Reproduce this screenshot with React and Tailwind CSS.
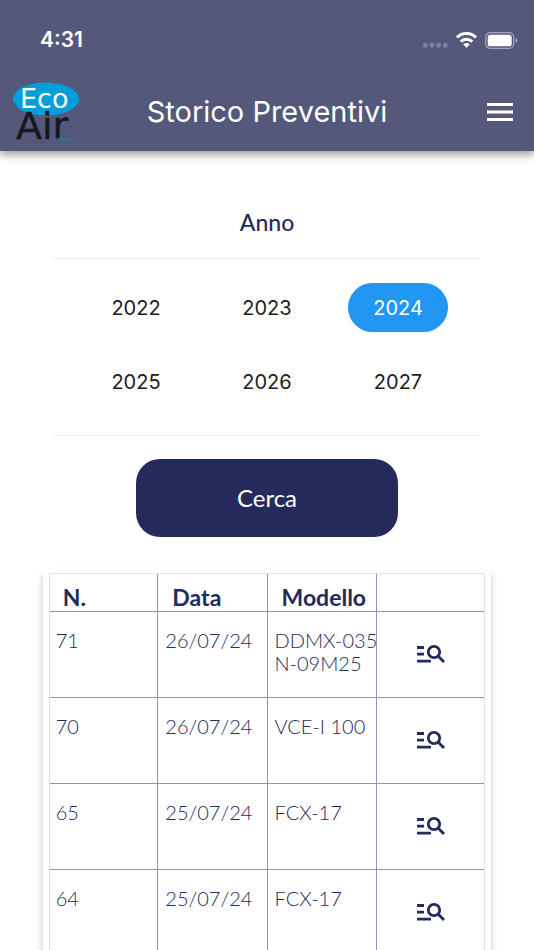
import React, { useState } from "react";

const years = [2022, 2023, 2024, 2025, 2026, 2027];

const quotes = [
  { id: 71, date: "26/07/24", model: ["DDMX-035", "N-09M25"] },
  { id: 70, date: "26/07/24", model: ["VCE-I 100"] },
  { id: 65, date: "25/07/24", model: ["FCX-17"] },
  { id: 64, date: "25/07/24", model: ["FCX-17"] }
];

function Logo() {
  return (
    <svg width="68" height="60" viewBox="0 0 68 60" className="overflow-visible" role="img" aria-label="Eco Air">
      <ellipse cx="34" cy="17" rx="33" ry="16.500" fill="#009fda" />
      <text x="8" y="26" fontSize="27" fill="#fff" fontFamily="'DejaVu Sans', sans-serif">
        Eco
      </text>
      <text x="4" y="57" fontSize="38" fill="#17181c" stroke="#17181c" strokeWidth="0.5" fontFamily="'DejaVu Sans', sans-serif">
        Air
      </text>
      <path d="M45 57h18" stroke="#1b7fae" strokeWidth="1.2" />
    </svg>
  );
}

function StatusBar() {
  return (
    <div className="h-[72px] pt-2 pl-10 pr-4 flex items-center justify-between">
      <span className="text-[21px] font-semibold">4:31</span>
      <div className="flex items-center gap-2">
        <svg width="25" height="18" viewBox="0 0 25 18" fill="#7f82a0">
          <rect x="0" y="12" width="4.500" height="4.500" rx="1.4" />
          <rect x="6.700" y="12" width="4.500" height="4.500" rx="1.4" />
          <rect x="13.400" y="12" width="4.500" height="4.500" rx="1.4" />
          <rect x="20.100" y="12" width="4.500" height="4.500" rx="1.4" />
        </svg>
        <svg width="21" height="16" viewBox="0 0 21 16" fill="none" stroke="#fff" strokeWidth="3">
          <path d="M1 5.4a13.6 13.6 0 0 1 19 0" />
          <path d="M4.8 9.6a8.2 8.2 0 0 1 11.4 0" />
          <path d="M7.2 12.400a4.700 4.700 0 0 1 6.600 0L10.500 15.800z" fill="#fff" stroke="none" />
        </svg>
        <svg width="33" height="17" viewBox="0 0 33 17">
          <rect x="0.700" y="0.700" width="28" height="15.600" rx="4.500" fill="none" stroke="#a3a5bb" strokeWidth="1.2" />
          <rect x="2.700" y="2.700" width="24" height="11.600" rx="2.600" fill="#fff" />
          <path d="M30.500 6v5c1.400-.5 2-1.400 2-2.500s-.6-2-2-2.500z" fill="#a3a5bb" />
        </svg>
      </div>
    </div>
  );
}

function SearchListIcon() {
  return (
    <svg width="28" height="20" viewBox="0 0 28 20" fill="none" stroke="currentColor" strokeWidth="2.8">
      <path d="M0 3.500h7M0 10.200h7M0 17.200h14" />
      <circle cx="17" cy="8" r="5.700" />
      <path d="M20.800 11.800l6.200 6.200" />
    </svg>
  );
}

export default function App() {
  const [year, setYear] = useState(2024);

  return (
    <div className="h-screen flex flex-col overflow-hidden bg-white font-[Inter,sans-serif]">
      {/* HEADER */}
      <header className="shrink-0 bg-[#54587a] text-white shadow-[0_3px_9px_rgba(0,0,0,0.45)]">
        <StatusBar />
        <div className="h-[79px] px-3 flex items-center justify-between">
          <Logo />
          <h1 className="text-[29px]">Storico Preventivi</h1>
          <button aria-label="Menu" className="w-[68px] pr-[9px] flex justify-end">
            <svg width="26" height="18" viewBox="0 0 26 18" fill="#fff">
              <rect y="0" width="26" height="3" />
              <rect y="7.500" width="26" height="3" />
              <rect y="15" width="26" height="3" />
            </svg>
          </button>
        </div>
      </header>

      <main className="flex-1 overflow-hidden text-[#242a5c]">
        {/* YEAR PICKER */}
        <section className="mx-[10%] pt-[55px]">
          <h2 className="h-[52px] text-center text-[23px] leading-8 font-medium font-[Lato,sans-serif]">
            Anno
          </h2>
          <div className="border-y border-[#f0f0f2] pt-6 pb-[29px]">
            <div className="w-[92%] mx-auto grid grid-cols-3 gap-y-[25px] justify-items-center">
              {years.map(y => (
                <button
                  key={y}
                  onClick={() => setYear(y)}
                  aria-pressed={y === year}
                  className={
                    y === year
                      ? "w-[100px] h-[49px] rounded-full text-xl bg-[#2196f3] text-white"
                      : "w-[100px] h-[49px] rounded-full text-xl text-[#1d1d1f]"
                  }
                >
                  {y}
                </button>
              ))}
            </div>
          </div>
        </section>

        <button className="block w-[49%] h-[78px] mx-auto mt-[23px] rounded-3xl bg-[#242a5c] text-white text-2xl font-[Lato,sans-serif]">
          Cerca
        </button>

        {/* RESULTS */}
        <section className="mx-[8%] mt-[30px] p-[6px] rounded-md bg-white shadow-[0_6px_7px_rgba(36,42,92,0.28)] font-[Lato,sans-serif]">
          <table className="w-full table-fixed border-collapse border-hidden outline -outline-offset-1 outline-[#dfe0ea]">
            <thead>
              <tr className="h-[38px] text-left text-[23px] leading-6">
                {["N.", "Data", "Modello"].map(h => (
                  <th key={h} className="border border-[#9295b5] pt-[11px] pl-[14px] font-bold">
                    {h}
                  </th>
                ))}
                <td className="border border-[#9295b5]" />
              </tr>
            </thead>
            <tbody>
              {quotes.map(q => (
                <tr key={q.id} className="h-[86px] text-xl leading-[23px] align-top font-light">
                  <td className="border border-[#9295b5] pt-[17px] pl-[7px]">{q.id}</td>
                  <td className="border border-[#9295b5] pt-[17px] pl-[7px]">{q.date}</td>
                  <td className="border border-[#9295b5] pt-[17px] pl-[7px] whitespace-nowrap">
                    {q.model.map(line => (
                      <div key={line}>{line}</div>
                    ))}
                  </td>
                  <td className="border border-[#9295b5] align-middle">
                    <button aria-label="Dettagli" className="block mx-auto">
                      <SearchListIcon />
                    </button>
                  </td>
                </tr>
              ))}
            </tbody>
          </table>
        </section>
      </main>
    </div>
  );
}
